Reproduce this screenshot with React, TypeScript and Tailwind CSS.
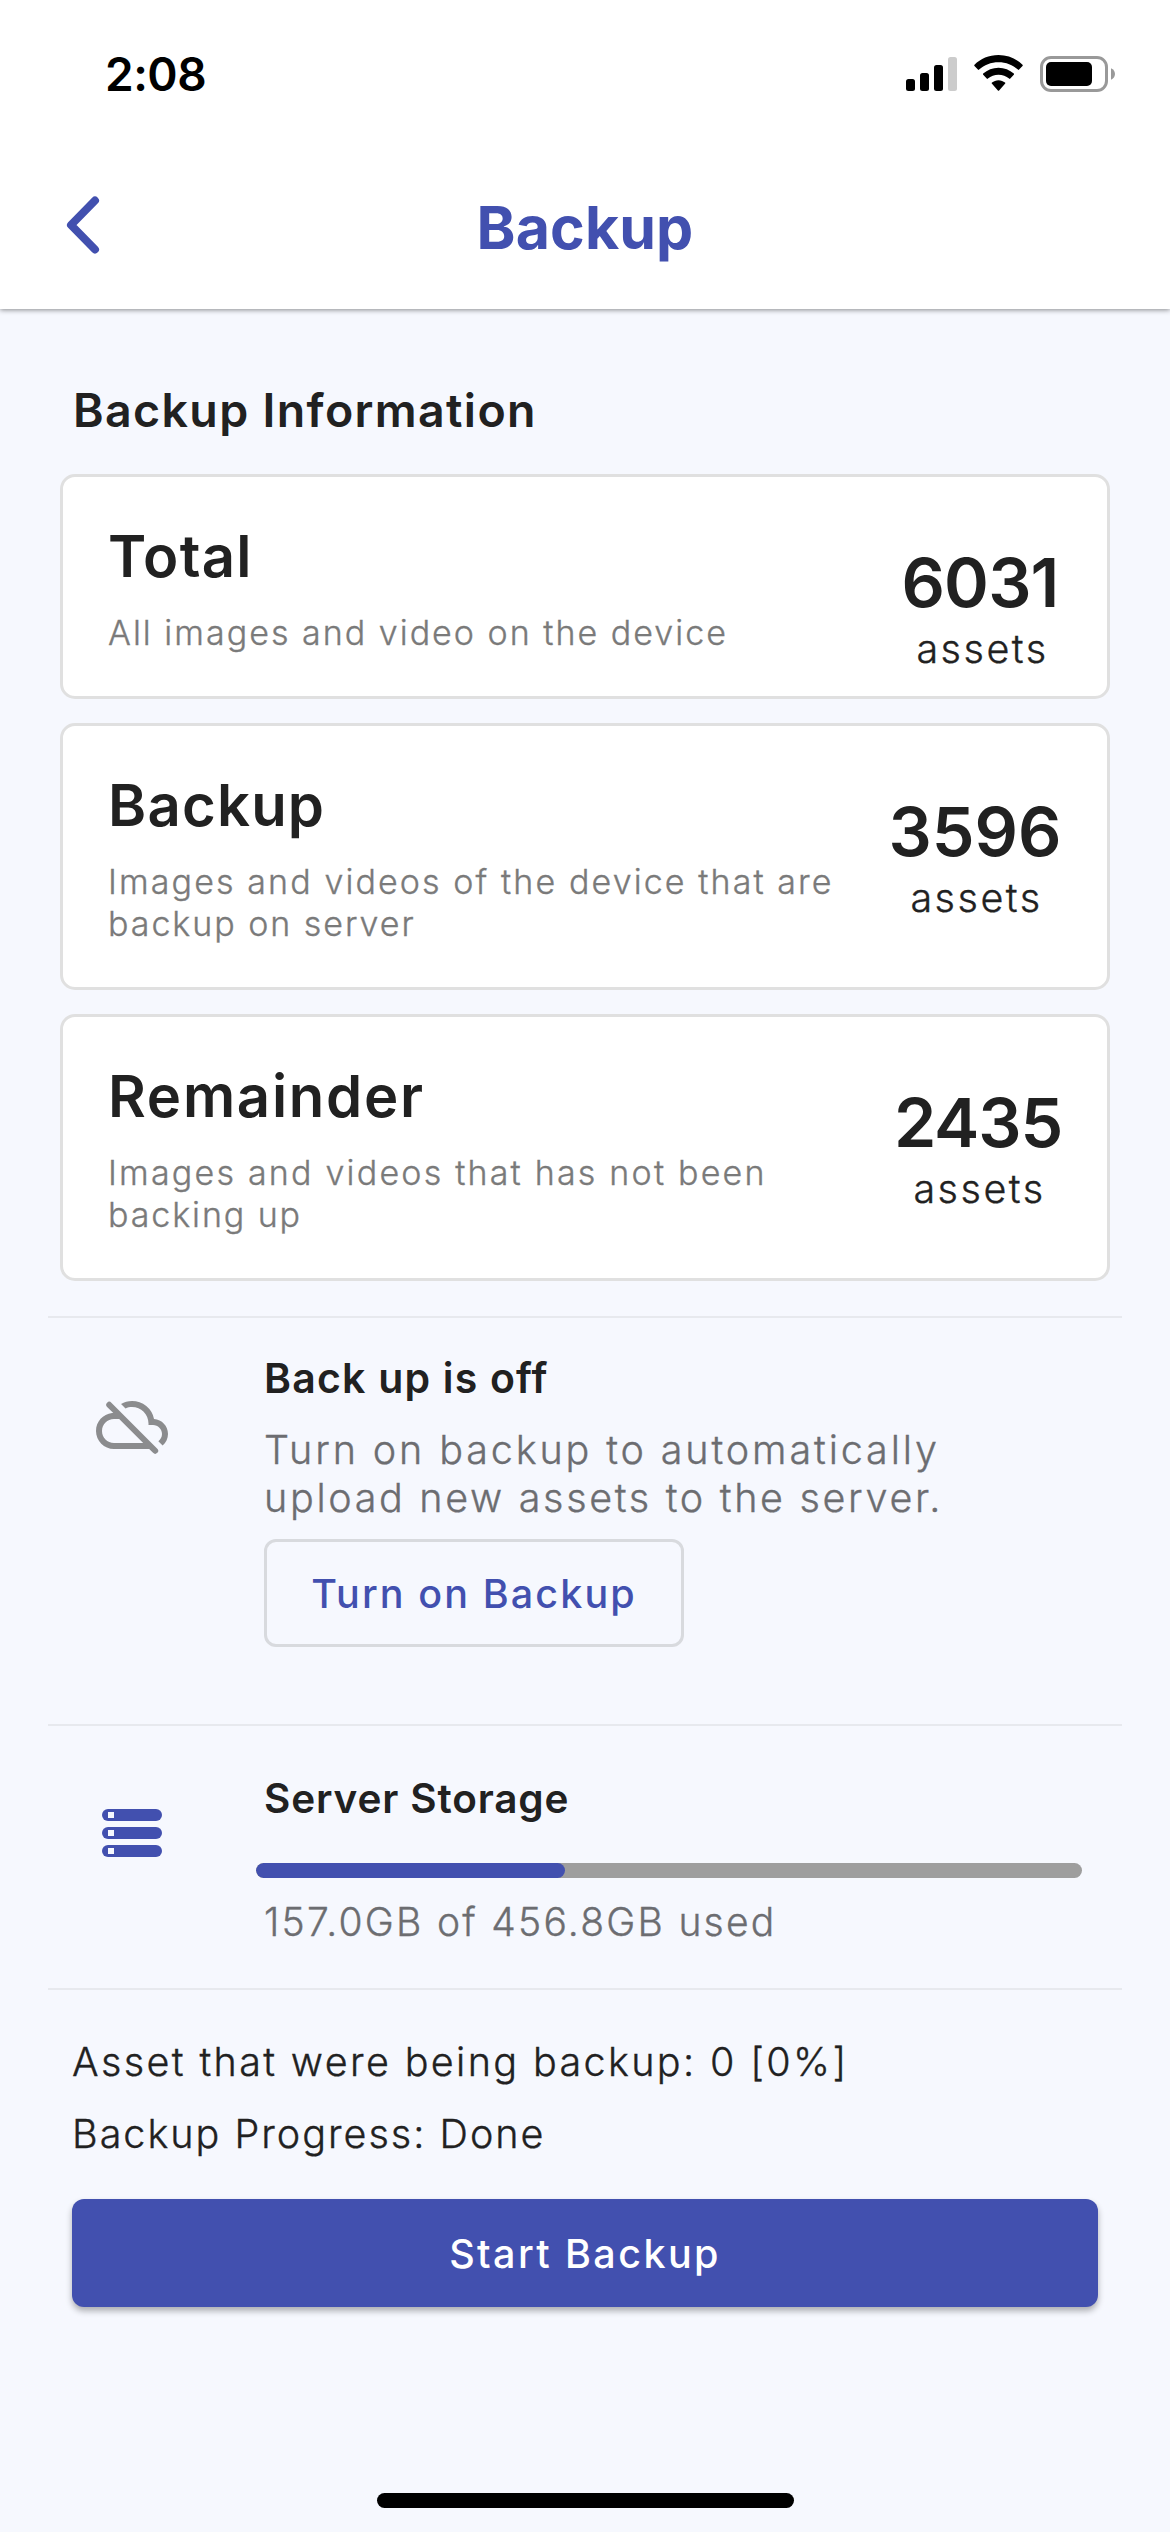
import React from "react";

type AssetCard = {
  title: string;
  titleSpacing: string;
  lines: { text: string; spacing: string }[];
  count: string;
  countSpacing: string;
  height: string;
  countWidth: string;
};

const cards: AssetCard[] = [
  {
    title: "Total",
    titleSpacing: "tracking-[1.3px]",
    lines: [{ text: "All images and video on the device", spacing: "tracking-[2.01px]" }],
    count: "6031",
    countSpacing: "tracking-[-0.8px] mr-[2px]",
    height: "h-[225px]",
    countWidth: "w-[162px]",
  },
  {
    title: "Backup",
    titleSpacing: "tracking-[1.2px]",
    lines: [
      { text: "Images and videos of the device that are", spacing: "tracking-[2.1px]" },
      { text: "backup on server", spacing: "tracking-[1.95px]" },
    ],
    count: "3596",
    countSpacing: "tracking-[0px]",
    height: "h-[267px]",
    countWidth: "w-[174px]",
  },
  {
    title: "Remainder",
    titleSpacing: "tracking-[1.75px]",
    lines: [
      { text: "Images and videos that has not been", spacing: "tracking-[2.2px]" },
      { text: "backing up", spacing: "tracking-[1.9px]" },
    ],
    count: "2435",
    countSpacing: "tracking-[-1.1px]",
    height: "h-[267px]",
    countWidth: "w-[168px]",
  },
];

function SignalIcon() {
  return (
    <svg width="51" height="34" viewBox="0 0 51 34">
      <rect x="0" y="22" width="9" height="12" rx="2.5" />
      <rect x="14" y="16" width="9" height="18" rx="2.5" />
      <rect x="28" y="8" width="9" height="26" rx="2.5" />
      <rect x="42" y="0" width="9" height="34" rx="2.5" fill="#cccccc" />
    </svg>
  );
}

function WifiIcon() {
  return (
    <svg width="49" height="36" viewBox="0 0 49 36" className="-mt-[2px]">
      <path d="M24.5 0C15 0 6.500 3.700.5 9.700a.8.8 0 0 0 0 1.200l3.400 3.700a.8.8 0 0 0 1.200 0C10.200 9.800 17 7.200 24.500 7.200s14.300 2.600 19.400 7.400a.8.8 0 0 0 1.200 0l3.400-3.700a.8.8 0 0 0 0-1.200C42.500 3.700 34 0 24.500 0z" />
      <path d="M24.500 12.700c-5.900 0-11.200 2.200-15.300 5.900a.8.8 0 0 0 0 1.200l3.500 3.800a.8.8 0 0 0 1.200 0c2.900-2.500 6.600-3.900 10.600-3.900s7.700 1.400 10.600 3.900a.8.8 0 0 0 1.200 0l3.500-3.800a.8.8 0 0 0 0-1.200c-4.100-3.700-9.400-5.900-15.300-5.900z" />
      <path d="M24.500 25.200c-2.500 0-4.800.9-6.500 2.400a.8.8 0 0 0 0 1.200l5.900 6.600a.8.8 0 0 0 1.200 0l5.900-6.600a.8.8 0 0 0 0-1.200c-1.700-1.500-4-2.400-6.500-2.400z" />
    </svg>
  );
}

function BatteryIcon() {
  return (
    <svg width="75" height="36" viewBox="0 0 75 36">
      <rect x="1.5" y="1.500" width="65" height="33" rx="9.500" fill="none" stroke="#999999" strokeWidth="3" />
      <rect x="6" y="6" width="46" height="24" rx="5" />
      <path d="M71 12.200c2.400 1 4 3.200 4 5.800s-1.600 4.800-4 5.800z" fill="#999999" />
    </svg>
  );
}

function CloudOffIcon() {
  return (
    <svg width="72" height="72" viewBox="0 0 24 24" fill="#8b8c8e">
      <path d="M24 15c0-2.640-2.050-4.780-4.650-4.960A7.490 7.490 0 0 0 12 4c-1.330 0-2.570.360-3.650.970l1.490 1.490C10.510 6.170 11.230 6 12 6c3.040 0 5.500 2.460 5.500 5.500v.500H19c1.660 0 3 1.340 3 3 0 .990-.480 1.850-1.210 2.400l1.410 1.410C23.290 17.890 24 16.540 24 15zM3.710 4.560a.996.996 0 0 0 0 1.410l2.060 2.060h-.420C2.340 8.360 0 10.910 0 14c0 3.310 2.690 6 6 6h11.730l1.290 1.290a.996.996 0 1 0 1.410-1.410L5.120 4.560a.996.996 0 0 0-1.410 0zM7.730 10l8 8H6c-2.210 0-4-1.790-4-4s1.790-4 4-4h1.730z" />
    </svg>
  );
}

function StorageIcon() {
  return (
    <svg width="72" height="72" viewBox="0 0 24 24" fill="#4250af">
      {[4, 10, 16].map((y) => (
        <g key={y}>
          <rect x="2" y={y} width="20" height="4" rx="2" />
          <rect x="4" y={y + 1} width="2" height="2" fill="#f6f8fe" />
        </g>
      ))}
    </svg>
  );
}

function Divider() {
  return <div className="h-[2px] bg-[#e7e9ee]" />;
}

function InfoCard({ card }: { card: AssetCard }) {
  return (
    <div className={`flex justify-between rounded-[15px] border-[3px] border-[#e0e0e0] bg-white pr-[45px] pl-[45px] ${card.height}`}>
      <div className="pt-[44px]">
        <h2 className={`text-[58px] leading-[70px] font-semibold ${card.titleSpacing}`}>{card.title}</h2>
        <div className="mt-[21px] text-[34px] leading-[42px] font-light text-[#7a7a7a] [-webkit-text-stroke:0.35px]">
          {card.lines.map((line) => (
            <p key={line.text} className={`whitespace-nowrap ${line.spacing}`}>{line.text}</p>
          ))}
        </div>
      </div>
      <div className={`flex flex-col items-center pt-[64px] ${card.countWidth}`}>
        <span className={`text-[68px] leading-[82px] font-semibold ${card.countSpacing}`}>{card.count}</span>
        <span className="mt-[3px] -mr-[3px] text-[39.5px] leading-[46px] font-light tracking-[2.5px] [-webkit-text-stroke:0.35px]">assets</span>
      </div>
    </div>
  );
}

export default function App() {
  return (
    <div className="flex h-[2532px] w-[1170px] flex-col overflow-hidden bg-[#f6f8fe] font-[Inter,sans-serif] text-[#212121]">
      <header className="h-[309px] shrink-0 bg-white shadow-[0_1px_5px_rgba(0,0,0,0.45)]">
        <div className="flex h-[148px] items-center justify-between pr-[55px] pl-[105px] text-black">
          <span className="text-[46px] leading-[56px] font-semibold tracking-[-0.5px]">2:08</span>
          <div className="flex items-center gap-[17px]">
            <SignalIcon />
            <WifiIcon />
            <BatteryIcon />
          </div>
        </div>
        <div className="grid h-[161px] grid-cols-[1fr_auto_1fr] items-center text-[#4250af]">
          <svg width="40" height="64" viewBox="0 0 40 64" className="-mt-[7px] ml-[63px]" fill="none" stroke="currentColor" strokeWidth="8" strokeLinecap="round" strokeLinejoin="round">
            <path d="M32 7.500 8 32l24 24.500" />
          </svg>
          <h1 className="-mt-[2px] text-[59px] leading-[70px] font-bold tracking-[0.1px]">Backup</h1>
        </div>
      </header>

      <main className="flex flex-col px-[48px] pt-[71px]">
        <h2 className="ml-[25px] text-[46.5px] leading-[60px] font-semibold tracking-[1.35px]">Backup Information</h2>

        <div className="mx-[12px] mt-[34px] mb-[35px] flex flex-col gap-6">
          {cards.map((card) => (
            <InfoCard key={card.title} card={card} />
          ))}
        </div>

        <Divider />

        <section className="flex h-[406px] pl-[48px]">
          <div className="pt-[71px]">
            <CloudOffIcon />
          </div>
          <div className="ml-[96px] pt-[34px]">
            <h3 className="text-[41px] leading-[52px] font-semibold tracking-[1.2px]">Back up is off</h3>
            <div className="mt-[22px] text-[39.5px] leading-[48px] font-light whitespace-nowrap text-[#6c6d71] [-webkit-text-stroke:0.35px]">
              <p className="tracking-[2.87px]">Turn on backup to automatically</p>
              <p className="tracking-[2.67px]">upload new assets to the server.</p>
            </div>
            <button className="mt-[17px] flex h-[108px] w-[420px] items-center justify-center rounded-[12px] border-[3px] border-[#d8dade] pt-[2px] text-[39.5px] leading-[48px] font-medium tracking-[2.1px] text-[#4250af]">
              Turn on Backup
            </button>
          </div>
        </section>

        <Divider />

        <section className="flex h-[262px] pl-[48px]">
          <div className="pt-[71px]">
            <StorageIcon />
          </div>
          <div className="ml-[88px] pt-[47px]">
            <h3 className="ml-[8px] text-[40.5px] leading-[52px] font-semibold tracking-[0.85px]">Server Storage</h3>
            <div className="mt-[38px] h-[15px] w-[826px] overflow-hidden rounded-full bg-[#9e9e9e]">
              <div className="h-full w-[37.4%] rounded-full bg-[#4250af]" />
            </div>
            <p className="mt-[20px] ml-[8px] text-[39px] leading-[48px] font-light tracking-[2.26px] text-[#6c6d71] [-webkit-text-stroke:0.35px]">157.0GB of 456.8GB used</p>
          </div>
        </section>

        <Divider />

        <div className="mt-[48px] ml-[25px] flex flex-col gap-6 text-[39.5px] leading-[48px] font-light [-webkit-text-stroke:0.35px]">
          <p className="-ml-px tracking-[2.37px]">Asset that were being backup: 0 [0%]</p>
          <p className="-ml-px tracking-[2px]">Backup Progress: Done</p>
        </div>

        <button className="mx-[24px] mt-[41px] flex h-[108px] items-center justify-center rounded-[12px] bg-[#4250af] pt-[2px] text-[39.5px] leading-[48px] font-medium tracking-[2.4px] text-white shadow-[0_4px_6px_rgba(0,0,0,0.3)]">
          Start Backup
        </button>

        <div className="mt-[186px] h-[15px] w-[417px] self-center rounded-full bg-black" />
      </main>
    </div>
  );
}
